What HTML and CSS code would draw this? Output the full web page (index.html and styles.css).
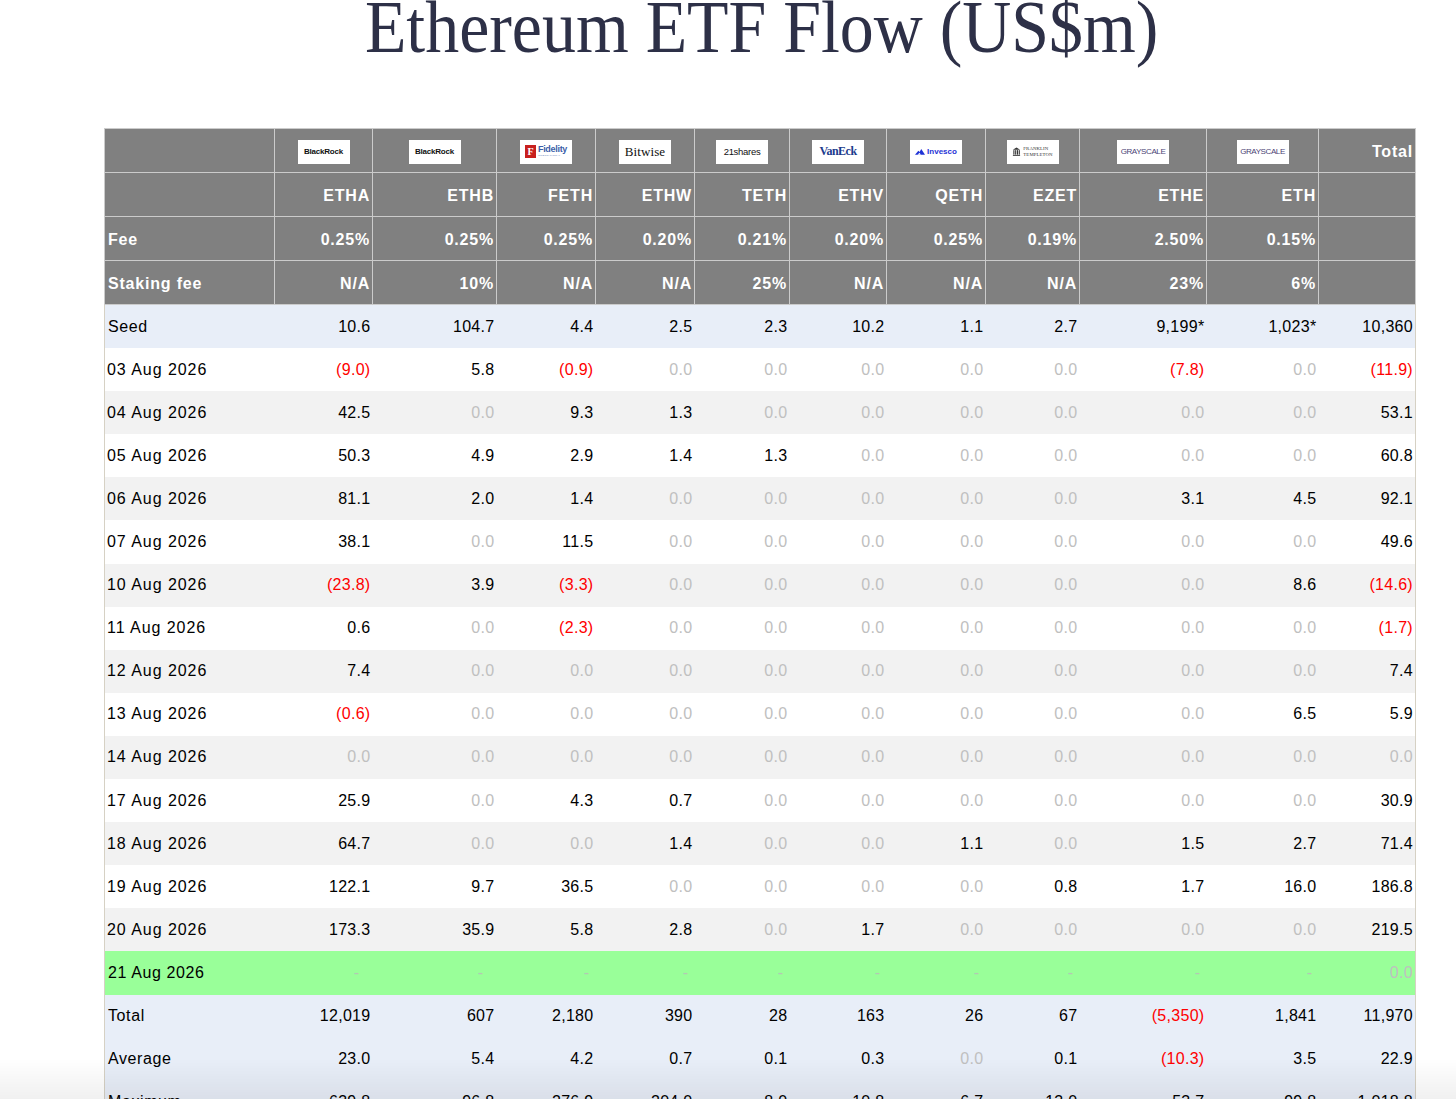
FILE: index.html
```html
<!DOCTYPE html>
<html lang="en">
<head>
<meta charset="utf-8">
<title>Ethereum ETF Flow (US$m)</title>
<link rel="stylesheet" href="styles.css">
</head>
<body>
<div class="page">
  <div class="title-wrap"><h1 class="title">Ethereum ETF Flow (US$m)</h1></div>
  <table class="flow">
    <colgroup>
      <col class="c-label"><col class="c-etha"><col class="c-ethb"><col class="c-feth"><col class="c-ethw"><col class="c-teth"><col class="c-ethv"><col class="c-qeth"><col class="c-ezet"><col class="c-ethe"><col class="c-eth"><col class="c-total">
    </colgroup>
    <thead>
      <tr>
        <th class="label"></th>
        <th class="logo-cell"><span class="logo"><span class="lg-blackrock">BlackRock</span></span></th>
        <th class="logo-cell"><span class="logo"><span class="lg-blackrock">BlackRock</span></span></th>
        <th class="logo-cell"><span class="logo"><span class="lg-fid-box">F</span><span class="lg-fid-txt"><span class="lg-fid-name">Fidelity</span><span class="lg-fid-sub">INTERNATIONAL</span></span></span></th>
        <th class="logo-cell"><span class="logo"><span class="lg-bitwise">Bitwise</span></span></th>
        <th class="logo-cell"><span class="logo"><span class="lg-21">21shares</span></span></th>
        <th class="logo-cell"><span class="logo"><span class="lg-vaneck">VanEck</span></span></th>
        <th class="logo-cell"><span class="logo"><svg class="lg-inv-icon" viewBox="0 0 12 8" width="10" height="7"><path d="M0 8 L4 3 L5.5 4.5 L7.5 1 L12 8 Z" fill="#1f33d6"/><path d="M3 8 L5.5 5.5 L7 8 Z" fill="#fff"/></svg><span class="lg-invesco">Invesco</span></span></th>
        <th class="logo-cell"><span class="logo"><svg class="lg-ft-icon" viewBox="0 0 10 10" width="9" height="9"><path d="M1 3 L5 0.5 L9 3 Z" fill="#333"/><rect x="1.5" y="3.5" width="1.2" height="5" fill="#333"/><rect x="3.5" y="3.5" width="1.2" height="5" fill="#333"/><rect x="5.5" y="3.5" width="1.2" height="5" fill="#333"/><rect x="7.5" y="3.5" width="1.2" height="5" fill="#333"/><rect x="1" y="8.8" width="8" height="1" fill="#333"/></svg><span class="lg-ft"><span>FRANKLIN</span><span>TEMPLETON</span></span></span></th>
        <th class="logo-cell"><span class="logo"><span class="lg-gray">GRAYSCALE</span></span></th>
        <th class="logo-cell"><span class="logo"><span class="lg-gray">GRAYSCALE</span></span></th>
        <th>Total</th>
      </tr>
      <tr>
        <th class="label"></th>
        <th>ETHA</th><th>ETHB</th><th>FETH</th><th>ETHW</th><th>TETH</th><th>ETHV</th><th>QETH</th><th>EZET</th><th>ETHE</th><th>ETH</th><th></th>
      </tr>
      <tr>
        <th class="label">Fee</th>
        <th>0.25%</th><th>0.25%</th><th>0.25%</th><th>0.20%</th><th>0.21%</th><th>0.20%</th><th>0.25%</th><th>0.19%</th><th>2.50%</th><th>0.15%</th><th></th>
      </tr>
      <tr>
        <th class="label">Staking fee</th>
        <th>N/A</th><th>10%</th><th>N/A</th><th>N/A</th><th>25%</th><th>N/A</th><th>N/A</th><th>N/A</th><th>23%</th><th>6%</th><th></th>
      </tr>
    </thead>
    <tbody>
      <tr class="blue">
        <td class="label">Seed</td>
        <td>10.6</td><td>104.7</td><td>4.4</td><td>2.5</td><td>2.3</td><td>10.2</td><td>1.1</td><td>2.7</td><td>9,199*</td><td>1,023*</td><td>10,360</td>
      </tr>
      <tr class="odd">
        <td class="label">03 Aug 2026</td>
        <td class="neg">(9.0)</td><td>5.8</td><td class="neg">(0.9)</td><td class="zero">0.0</td><td class="zero">0.0</td><td class="zero">0.0</td><td class="zero">0.0</td><td class="zero">0.0</td><td class="neg">(7.8)</td><td class="zero">0.0</td><td class="neg">(11.9)</td>
      </tr>
      <tr class="even">
        <td class="label">04 Aug 2026</td>
        <td>42.5</td><td class="zero">0.0</td><td>9.3</td><td>1.3</td><td class="zero">0.0</td><td class="zero">0.0</td><td class="zero">0.0</td><td class="zero">0.0</td><td class="zero">0.0</td><td class="zero">0.0</td><td>53.1</td>
      </tr>
      <tr class="odd">
        <td class="label">05 Aug 2026</td>
        <td>50.3</td><td>4.9</td><td>2.9</td><td>1.4</td><td>1.3</td><td class="zero">0.0</td><td class="zero">0.0</td><td class="zero">0.0</td><td class="zero">0.0</td><td class="zero">0.0</td><td>60.8</td>
      </tr>
      <tr class="even">
        <td class="label">06 Aug 2026</td>
        <td>81.1</td><td>2.0</td><td>1.4</td><td class="zero">0.0</td><td class="zero">0.0</td><td class="zero">0.0</td><td class="zero">0.0</td><td class="zero">0.0</td><td>3.1</td><td>4.5</td><td>92.1</td>
      </tr>
      <tr class="odd">
        <td class="label">07 Aug 2026</td>
        <td>38.1</td><td class="zero">0.0</td><td>11.5</td><td class="zero">0.0</td><td class="zero">0.0</td><td class="zero">0.0</td><td class="zero">0.0</td><td class="zero">0.0</td><td class="zero">0.0</td><td class="zero">0.0</td><td>49.6</td>
      </tr>
      <tr class="even">
        <td class="label">10 Aug 2026</td>
        <td class="neg">(23.8)</td><td>3.9</td><td class="neg">(3.3)</td><td class="zero">0.0</td><td class="zero">0.0</td><td class="zero">0.0</td><td class="zero">0.0</td><td class="zero">0.0</td><td class="zero">0.0</td><td>8.6</td><td class="neg">(14.6)</td>
      </tr>
      <tr class="odd">
        <td class="label">11 Aug 2026</td>
        <td>0.6</td><td class="zero">0.0</td><td class="neg">(2.3)</td><td class="zero">0.0</td><td class="zero">0.0</td><td class="zero">0.0</td><td class="zero">0.0</td><td class="zero">0.0</td><td class="zero">0.0</td><td class="zero">0.0</td><td class="neg">(1.7)</td>
      </tr>
      <tr class="even">
        <td class="label">12 Aug 2026</td>
        <td>7.4</td><td class="zero">0.0</td><td class="zero">0.0</td><td class="zero">0.0</td><td class="zero">0.0</td><td class="zero">0.0</td><td class="zero">0.0</td><td class="zero">0.0</td><td class="zero">0.0</td><td class="zero">0.0</td><td>7.4</td>
      </tr>
      <tr class="odd">
        <td class="label">13 Aug 2026</td>
        <td class="neg">(0.6)</td><td class="zero">0.0</td><td class="zero">0.0</td><td class="zero">0.0</td><td class="zero">0.0</td><td class="zero">0.0</td><td class="zero">0.0</td><td class="zero">0.0</td><td class="zero">0.0</td><td>6.5</td><td>5.9</td>
      </tr>
      <tr class="even">
        <td class="label">14 Aug 2026</td>
        <td class="zero">0.0</td><td class="zero">0.0</td><td class="zero">0.0</td><td class="zero">0.0</td><td class="zero">0.0</td><td class="zero">0.0</td><td class="zero">0.0</td><td class="zero">0.0</td><td class="zero">0.0</td><td class="zero">0.0</td><td class="zero">0.0</td>
      </tr>
      <tr class="odd">
        <td class="label">17 Aug 2026</td>
        <td>25.9</td><td class="zero">0.0</td><td>4.3</td><td>0.7</td><td class="zero">0.0</td><td class="zero">0.0</td><td class="zero">0.0</td><td class="zero">0.0</td><td class="zero">0.0</td><td class="zero">0.0</td><td>30.9</td>
      </tr>
      <tr class="even">
        <td class="label">18 Aug 2026</td>
        <td>64.7</td><td class="zero">0.0</td><td class="zero">0.0</td><td>1.4</td><td class="zero">0.0</td><td class="zero">0.0</td><td>1.1</td><td class="zero">0.0</td><td>1.5</td><td>2.7</td><td>71.4</td>
      </tr>
      <tr class="odd">
        <td class="label">19 Aug 2026</td>
        <td>122.1</td><td>9.7</td><td>36.5</td><td class="zero">0.0</td><td class="zero">0.0</td><td class="zero">0.0</td><td class="zero">0.0</td><td>0.8</td><td>1.7</td><td>16.0</td><td>186.8</td>
      </tr>
      <tr class="even">
        <td class="label">20 Aug 2026</td>
        <td>173.3</td><td>35.9</td><td>5.8</td><td>2.8</td><td class="zero">0.0</td><td>1.7</td><td class="zero">0.0</td><td class="zero">0.0</td><td class="zero">0.0</td><td class="zero">0.0</td><td>219.5</td>
      </tr>
      <tr class="today">
        <td class="label">21 Aug 2026</td>
        <td class="dash wide">-</td><td class="dash wide">-</td><td class="dash">-</td><td class="dash">-</td><td class="dash">-</td><td class="dash">-</td><td class="dash">-</td><td class="dash">-</td><td class="dash">-</td><td class="dash">-</td><td class="zero">0.0</td>
      </tr>
      <tr class="blue">
        <td class="label">Total</td>
        <td>12,019</td><td>607</td><td>2,180</td><td>390</td><td>28</td><td>163</td><td>26</td><td>67</td><td class="neg">(5,350)</td><td>1,841</td><td>11,970</td>
      </tr>
      <tr class="blue">
        <td class="label">Average</td>
        <td>23.0</td><td>5.4</td><td>4.2</td><td>0.7</td><td>0.1</td><td>0.3</td><td class="zero">0.0</td><td>0.1</td><td class="neg">(10.3)</td><td>3.5</td><td>22.9</td>
      </tr>
      <tr class="blue">
        <td class="label">Maximum</td>
        <td>639.8</td><td>96.8</td><td>276.9</td><td>204.0</td><td>8.0</td><td>10.8</td><td>6.7</td><td>13.0</td><td>53.7</td><td>99.8</td><td>1,018.8</td>
      </tr>
    </tbody>
  </table>
</div>
<div class="shade"></div>
</body>
</html>
```
FILE: styles.css
```css
html, body {
  margin: 0;
  padding: 0;
  background: #ffffff;
}

body {
  font-family: "Liberation Sans", Arial, sans-serif;
  color: #000;
}

.page {
  padding-left: 104px;
}

.title-wrap {
  width: 1311px;
  height: 74px;
  margin-top: -10px;
  padding-left: 2px;
  text-align: center;
}

.title {
  display: inline-block;
  margin: 0;
  font-family: "Liberation Serif", "Times New Roman", serif;
  font-weight: normal;
  font-size: 74px;
  line-height: 74px;
  color: #2d3047;
  white-space: nowrap;
  transform: scaleX(0.917);
}

.flow {
  margin-top: 64px;
  width: 1311px;
  table-layout: fixed;
  border-collapse: collapse;
  border: 1px solid #d6d1c4;
}

.c-label { width: 170px; }
.c-etha { width: 98px; }
.c-ethb { width: 124px; }
.c-feth { width: 99px; }
.c-ethw { width: 99px; }
.c-teth { width: 95px; }
.c-ethv { width: 97px; }
.c-qeth { width: 99px; }
.c-ezet { width: 94px; }
.c-ethe { width: 127px; }
.c-eth { width: 112px; }
.c-total { width: 97px; }

.flow th {
  height: 41px;
  padding: 2px 2px 0 3px;
  background: #808080;
  color: #ffffff;
  font-size: 16px;
  font-weight: bold;
  letter-spacing: 0.8px;
  text-align: right;
  border: 1px solid #cbcbcb;
  white-space: nowrap;
}

.flow th.label {
  text-align: left;
}

.flow th.logo-cell {
  text-align: center;
  padding: 1px 0 0;
  letter-spacing: 0;
}

.flow td {
  height: 43.1px;
  padding: 0 2px 0 3px;
  font-size: 16px;
  letter-spacing: 0.3px;
  text-align: right;
  white-space: nowrap;
  color: #000;
}

.flow td.label {
  text-align: left;
  padding-left: 2px;
  letter-spacing: 0.95px;
}

.blue td.label,
.today td.label {
  padding-left: 3px;
  letter-spacing: 0.6px;
}

.flow td.neg { color: #ff0000; }
.flow td.zero { color: #c0c0c0; }
.flow td.dash { color: #b4c8b4; padding-right: 6px; }
.flow td.dash.wide { padding-right: 13px; }

.blue td { background: #e8eef8; }
.odd td { background: #ffffff; }
.even td { background: #f2f2f2; }
.today td { background: #99ff99; }

/* logos */
.logo {
  display: inline-flex;
  align-items: center;
  justify-content: center;
  gap: 2px;
  width: 52px;
  height: 24px;
  margin-top: 1px;
  background: #ffffff;
  vertical-align: middle;
  overflow: hidden;
  font-weight: normal;
  letter-spacing: 0;
}

.lg-blackrock {
  font-family: "Liberation Sans", Arial, sans-serif;
  font-weight: bold;
  font-size: 8px;
  letter-spacing: -0.2px;
  color: #111;
}

.lg-fid-box {
  display: inline-flex;
  align-items: center;
  justify-content: center;
  width: 11px;
  height: 13px;
  background: #c8201e;
  color: #fff;
  font-family: "Liberation Serif", serif;
  font-weight: bold;
  font-size: 10px;
}

.lg-fid-txt {
  display: inline-flex;
  flex-direction: column;
  align-items: flex-start;
  line-height: 1;
}

.lg-fid-name {
  font-family: "Liberation Sans", Arial, sans-serif;
  font-weight: bold;
  font-size: 9px;
  color: #3b5ea8;
  letter-spacing: -0.3px;
}

.lg-fid-sub {
  font-size: 2.5px;
  color: #6a84b8;
  letter-spacing: 0.2px;
  margin-top: 1px;
}

.lg-bitwise {
  font-family: "Liberation Serif", serif;
  font-size: 13px;
  color: #111;
  letter-spacing: 0.1px;
}

.lg-21 {
  font-family: "Liberation Sans", Arial, sans-serif;
  font-size: 9.5px;
  color: #111;
  letter-spacing: -0.3px;
}

.lg-vaneck {
  font-family: "Liberation Serif", serif;
  font-weight: bold;
  font-size: 12px;
  color: #1c3b8d;
  letter-spacing: -0.5px;
}

.lg-inv-icon {
  display: block;
}

.lg-invesco {
  font-family: "Liberation Sans", Arial, sans-serif;
  font-weight: bold;
  font-size: 8px;
  color: #1f33d6;
}

.lg-ft-icon {
  display: block;
}

.lg-ft {
  display: inline-flex;
  flex-direction: column;
  align-items: flex-start;
  font-family: "Liberation Serif", serif;
  font-size: 4.8px;
  line-height: 1.05;
  color: #333;
  letter-spacing: 0.1px;
}

.lg-gray {
  font-family: "Liberation Sans", Arial, sans-serif;
  font-size: 8px;
  color: #4a3f74;
  letter-spacing: -0.4px;
}

.shade {
  position: fixed;
  left: 0;
  right: 0;
  bottom: 0;
  height: 40px;
  background: linear-gradient(rgba(0, 0, 0, 0), rgba(0, 0, 0, 0.06));
  pointer-events: none;
}
```
